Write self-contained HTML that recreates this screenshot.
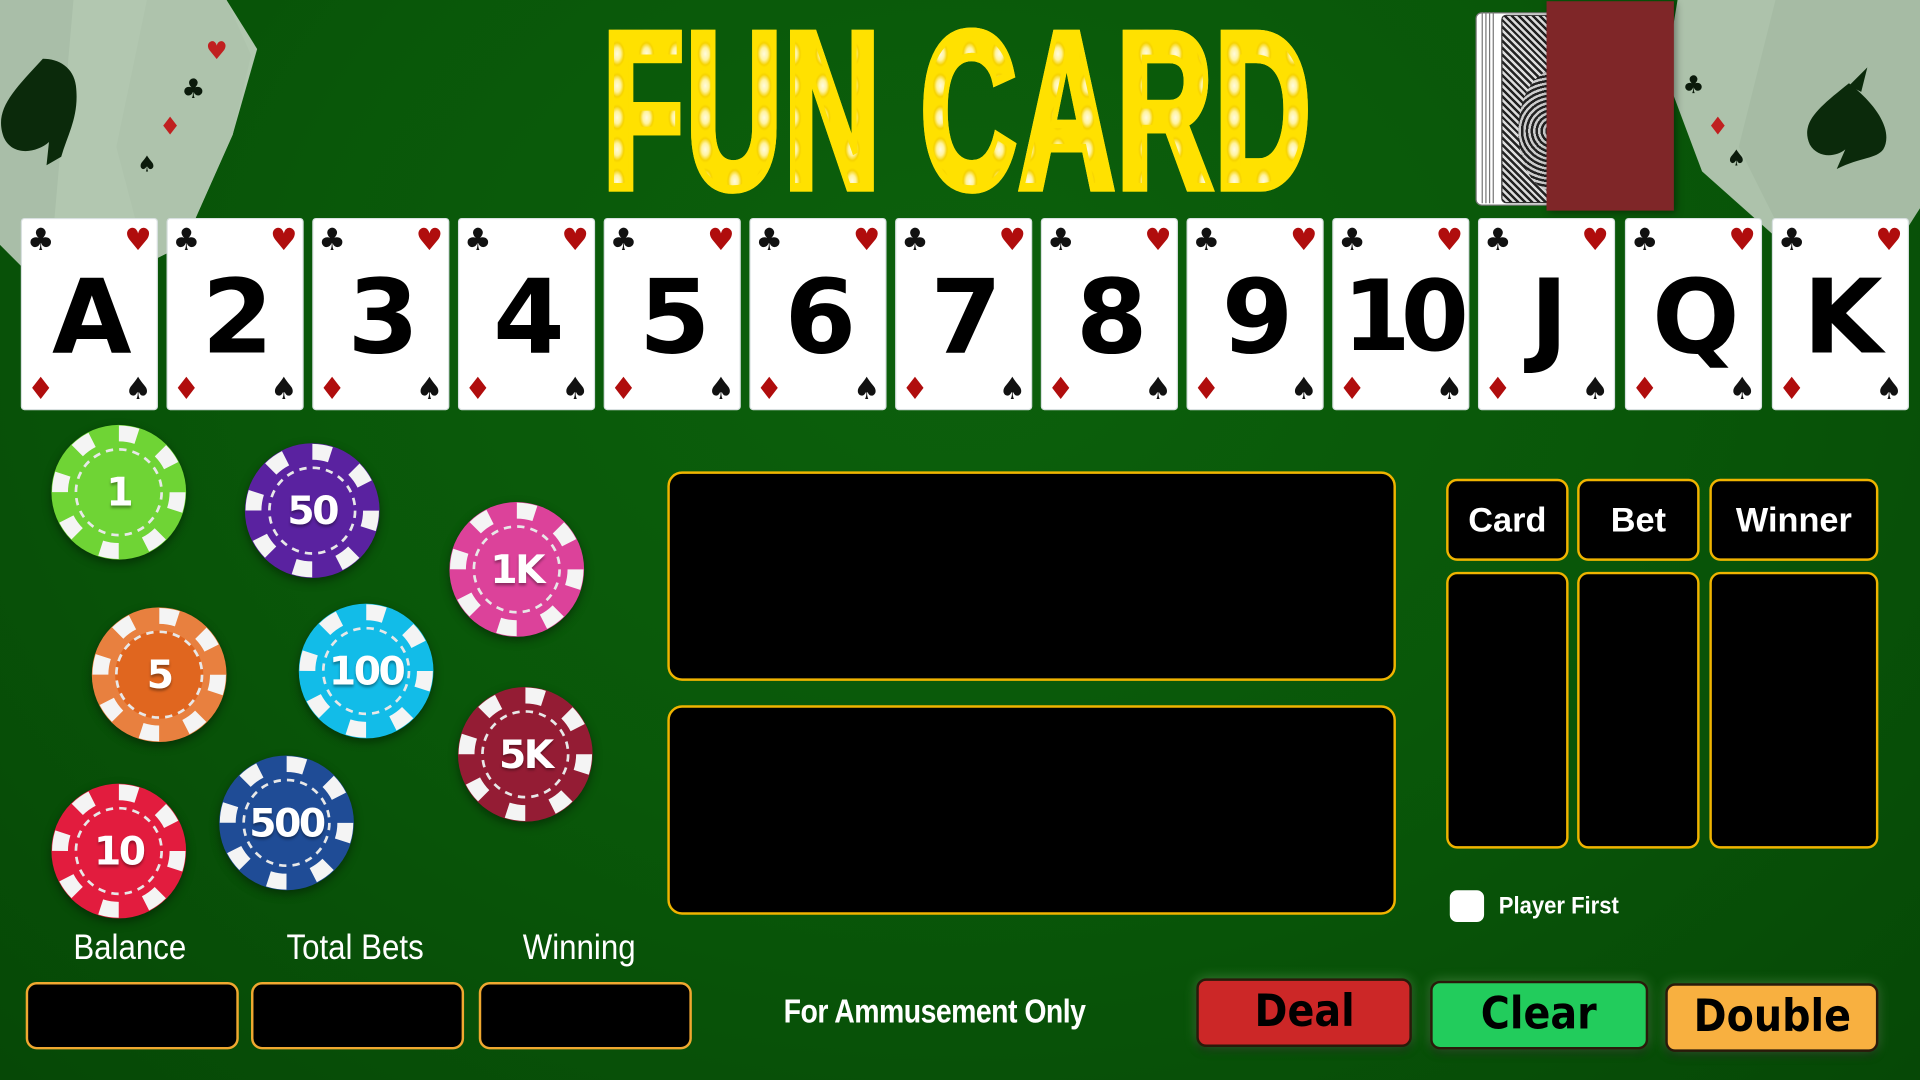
<!DOCTYPE html>
<html><head><meta charset="utf-8">
<style>
html,body{margin:0;padding:0;width:1920px;height:1080px;overflow:hidden;background:#075207}
#w{position:absolute;left:0;top:0;width:1568px;height:882px;transform:scale(1.22449);transform-origin:0 0;
background:radial-gradient(ellipse at 50% 30%,#0c600c 0%,#095709 50%,#064806 100%);font-family:"Liberation Sans",sans-serif;overflow:hidden}
.a{position:absolute}
.title{position:absolute;left:492px;top:5px;height:170px;font-family:"Liberation Sans",sans-serif;font-weight:bold;font-size:182px;line-height:170px;color:#ffe100;letter-spacing:2px;white-space:nowrap;transform:scaleX(0.6);transform-origin:0 0;
background:radial-gradient(circle at 50% 50%,#fffbe0 0,#fff3a0 5px,#f6d300 9px,#ffe100 11px) 0 0/40px 26px;-webkit-background-clip:text;background-clip:text;-webkit-text-fill-color:transparent;-webkit-text-stroke:7px #ffe100}
.card{position:absolute;top:178px;width:112px;height:157px;background:#fff;border-radius:3px;border:1px solid #d8e0e0;box-sizing:border-box}
.card .s{position:absolute;font-family:"DejaVu Sans",sans-serif;font-size:25px;line-height:25px}
.card .tl{left:4px;top:4px;color:#111}.card .tr{right:4px;top:4px;color:#b00d0d}
.card .bl{left:4px;bottom:4px;color:#b00d0d}.card .br{right:4px;bottom:4px;color:#111}
.card .r{position:absolute;left:0;right:0;top:30px;text-align:center;font-family:"DejaVu Sans",sans-serif;font-weight:bold;font-size:84px;line-height:100px;color:#000;letter-spacing:-4px}
.chip{position:absolute;width:112px;height:112px;filter:drop-shadow(0 3px 4px rgba(0,0,0,.4))}
.chip span{position:absolute;left:0;right:0;top:0;line-height:112px;text-align:center;color:#fff;font-family:"DejaVu Sans",sans-serif;font-weight:bold;font-size:32px;letter-spacing:-2px;text-shadow:0 2px 2px rgba(0,0,0,.35)}
.pan{position:absolute;background:#000;border:2px solid #f0b400;border-radius:12px;box-sizing:border-box}
.hd{position:absolute;top:391px;height:67px;background:#000;border:2px solid #f0b400;border-radius:9px;box-sizing:border-box;color:#fff;font-weight:bold;font-size:28px;text-align:center;line-height:63px}
.col{position:absolute;top:467px;height:226px;background:#000;border:2px solid #f0b400;border-radius:9px;box-sizing:border-box}
.lab{position:absolute;top:758px;color:#fff;font-size:29px;transform:translateX(-50%) scaleX(0.88)}
.box{position:absolute;top:802px;height:55px;width:174px;background:#000;border:2px solid #f0a830;border-radius:9px;box-sizing:border-box}
.btn{position:absolute;height:56px;border-radius:8px;box-sizing:border-box;border:2px solid #2a1a0a;text-align:center;font-family:"DejaVu Sans",sans-serif;font-weight:bold;font-size:36px;line-height:52px;color:#000;box-shadow:0 0 10px rgba(220,255,200,.25),0 4px 6px rgba(0,0,0,.4)}
.btn span{display:inline-block;transform:scaleX(0.9)}
</style></head><body><div id="w">

<svg class="a" style="left:0;top:0" width="230" height="240" viewBox="0 0 230 240">
<polygon points="0,0 60,0 110,170 40,240 0,200" fill="#a9bea8"/>
<polygon points="60,0 185,0 210,40 190,110 150,200 70,240 40,230" fill="#b2c7b0"/>
<polygon points="120,0 185,0 205,45 190,110 150,200 120,215 95,120" fill="#aec3ac"/>
<path d="M35 48 C10 75 -5 90 3 112 C10 128 30 125 40 116 L38 135 L50 128 C55 110 65 95 62 70 C60 55 48 48 35 48Z" fill="#0b2a0b"/>
<text x="168" y="48" font-size="20" fill="#c02020" font-family="DejaVu Sans">♥</text>
<text x="148" y="80" font-size="22" fill="#0b1a0b" font-family="DejaVu Sans">♣</text>
<text x="130" y="110" font-size="20" fill="#c02020" font-family="DejaVu Sans">♦</text>
<text x="112" y="140" font-size="18" fill="#0b1a0b" font-family="DejaVu Sans">♠</text>
</svg>
<svg class="a" style="left:1360px;top:0" width="208" height="240" viewBox="0 0 208 240">
<polygon points="10,0 208,0 208,170 160,240 120,220 30,140 0,60" fill="#adc2ab"/>
<polygon points="90,0 208,0 208,170 170,230 100,200 60,120" fill="#a6bba4"/>
<path d="M150 68 C125 88 110 100 118 118 C125 130 140 128 147 122 L140 138 C160 128 172 130 178 122 C185 110 178 90 150 68Z" fill="#0b2a0b"/>
<polygon points="150,70 165,55 160,75" fill="#0b2a0b"/>
<text x="14" y="76" font-size="20" fill="#0b1a0b" font-family="DejaVu Sans">♣</text>
<text x="34" y="110" font-size="20" fill="#c02020" font-family="DejaVu Sans">♦</text>
<text x="50" y="135" font-size="18" fill="#0b1a0b" font-family="DejaVu Sans">♠</text>
</svg>

<div class="title">FUN CARD</div>

<div class="a" style="left:1205px;top:10px;width:62px;height:156px;background:#fff;border:1px solid #777;border-radius:5px"></div>
<div class="a" style="left:1210px;top:10px;width:2px;height:156px;border-left:1px solid #777;border-right:1px solid #777"></div>
<div class="a" style="left:1216px;top:10px;width:2px;height:156px;border-left:1px solid #777;border-right:1px solid #777"></div>
<div class="a" style="left:1226px;top:12px;width:40px;height:152px;border-radius:4px;border:1px solid #333;background:repeating-linear-gradient(45deg,#222 0 2px,#ddd 2px 4px),#888"></div>
<div class="a" style="left:1240px;top:58px;width:56px;height:98px;border-radius:50%;background:repeating-radial-gradient(circle,#222 0 2px,#ccc 2px 4px)"></div>
<div class="a" style="left:1263px;top:1px;width:104px;height:171px;background:#7f2628;box-shadow:2px 2px 6px rgba(0,0,0,.4)"></div>

<div class="card" style="left:17px"><div class="s tl">♣</div><div class="s tr">♥</div><div class="r">A</div><div class="s bl">♦</div><div class="s br">♠</div></div>
<div class="card" style="left:136px"><div class="s tl">♣</div><div class="s tr">♥</div><div class="r">2</div><div class="s bl">♦</div><div class="s br">♠</div></div>
<div class="card" style="left:255px"><div class="s tl">♣</div><div class="s tr">♥</div><div class="r">3</div><div class="s bl">♦</div><div class="s br">♠</div></div>
<div class="card" style="left:374px"><div class="s tl">♣</div><div class="s tr">♥</div><div class="r">4</div><div class="s bl">♦</div><div class="s br">♠</div></div>
<div class="card" style="left:493px"><div class="s tl">♣</div><div class="s tr">♥</div><div class="r">5</div><div class="s bl">♦</div><div class="s br">♠</div></div>
<div class="card" style="left:612px"><div class="s tl">♣</div><div class="s tr">♥</div><div class="r">6</div><div class="s bl">♦</div><div class="s br">♠</div></div>
<div class="card" style="left:731px"><div class="s tl">♣</div><div class="s tr">♥</div><div class="r">7</div><div class="s bl">♦</div><div class="s br">♠</div></div>
<div class="card" style="left:850px"><div class="s tl">♣</div><div class="s tr">♥</div><div class="r">8</div><div class="s bl">♦</div><div class="s br">♠</div></div>
<div class="card" style="left:969px"><div class="s tl">♣</div><div class="s tr">♥</div><div class="r">9</div><div class="s bl">♦</div><div class="s br">♠</div></div>
<div class="card" style="left:1088px"><div class="s tl">♣</div><div class="s tr">♥</div><div class="r" style="letter-spacing:-8px;font-size:80px">10</div><div class="s bl">♦</div><div class="s br">♠</div></div>
<div class="card" style="left:1207px"><div class="s tl">♣</div><div class="s tr">♥</div><div class="r">J</div><div class="s bl">♦</div><div class="s br">♠</div></div>
<div class="card" style="left:1327px"><div class="s tl">♣</div><div class="s tr">♥</div><div class="r">Q</div><div class="s bl">♦</div><div class="s br">♠</div></div>
<div class="card" style="left:1447px"><div class="s tl">♣</div><div class="s tr">♥</div><div class="r">K</div><div class="s bl">♦</div><div class="s br">♠</div></div>

<svg width="0" height="0" style="position:absolute"><defs>
<g id="ring"><circle cx="56" cy="56" r="48" fill="none" stroke="#f4f4f4" stroke-width="13" stroke-dasharray="15 22.7"/>
<circle cx="56" cy="56" r="35" fill="none" stroke="#e8e8e8" stroke-width="2.2" stroke-dasharray="6 5"/></g></defs></svg>
<div class="chip" style="left:41px;top:346px"><svg width="112" height="112"><circle cx="56" cy="56" r="55" fill="#6fd435"/><use href="#ring"/></svg><span>1</span></div>
<div class="chip" style="left:199px;top:361px"><svg width="112" height="112"><circle cx="56" cy="56" r="55" fill="#5a22a0"/><use href="#ring"/></svg><span>50</span></div>
<div class="chip" style="left:366px;top:409px"><svg width="112" height="112"><circle cx="56" cy="56" r="55" fill="#dc429a"/><use href="#ring"/></svg><span>1K</span></div>
<div class="chip" style="left:74px;top:495px"><svg width="112" height="112"><circle cx="56" cy="56" r="55" fill="#e8803f"/><circle cx="56" cy="56" r="36" fill="#e0661f"/><use href="#ring"/></svg><span>5</span></div>
<div class="chip" style="left:243px;top:492px"><svg width="112" height="112"><circle cx="56" cy="56" r="55" fill="#12bce8"/><use href="#ring"/></svg><span>100</span></div>
<div class="chip" style="left:373px;top:560px"><svg width="112" height="112"><circle cx="56" cy="56" r="55" fill="#941c34"/><use href="#ring"/></svg><span>5K</span></div>
<div class="chip" style="left:41px;top:639px"><svg width="112" height="112"><circle cx="56" cy="56" r="55" fill="#e21c3e"/><use href="#ring"/></svg><span>10</span></div>
<div class="chip" style="left:178px;top:616px"><svg width="112" height="112"><circle cx="56" cy="56" r="55" fill="#1f4c96"/><use href="#ring"/></svg><span>500</span></div>

<div class="pan" style="left:545px;top:385px;width:595px;height:171px"></div>
<div class="pan" style="left:545px;top:576px;width:595px;height:171px"></div>

<div class="hd" style="left:1181px;width:100px">Card</div>
<div class="hd" style="left:1288px;width:100px">Bet</div>
<div class="hd" style="left:1396px;width:138px">Winner</div>
<div class="col" style="left:1181px;width:100px"></div>
<div class="col" style="left:1288px;width:100px"></div>
<div class="col" style="left:1396px;width:138px"></div>

<div class="a" style="left:1184px;top:727px;width:28px;height:26px;background:#fff;border-radius:6px"></div>
<div class="a" style="left:1224px;top:729px;color:#fff;font-weight:bold;font-size:20px;transform:scaleX(0.9);transform-origin:0 0">Player First</div>

<div class="lab" style="left:106px">Balance</div>
<div class="lab" style="left:290px">Total Bets</div>
<div class="lab" style="left:473px">Winning</div>
<div class="box" style="left:21px"></div>
<div class="box" style="left:205px"></div>
<div class="box" style="left:391px"></div>

<div class="a" style="left:640px;top:811px;color:#fff;font-weight:bold;font-size:27px;white-space:nowrap;transform:scaleX(0.86);transform-origin:0 0;letter-spacing:-0.5px">For Ammusement Only</div>

<div class="btn" style="left:977px;top:799px;width:176px;background:#cc2727"><span>Deal</span></div>
<div class="btn" style="left:1168px;top:801px;width:178px;background:#22cc5c"><span>Clear</span></div>
<div class="btn" style="left:1360px;top:803px;width:174px;background:#f8b040"><span>Double</span></div>

</div></body></html>
